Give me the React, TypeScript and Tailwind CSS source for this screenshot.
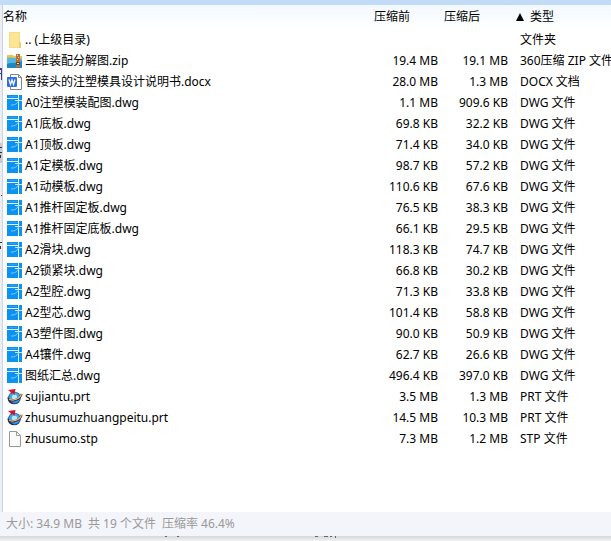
import type { ReactNode } from 'react'

type Kind = 'folder' | 'zip' | 'docx' | 'dwg' | 'prt' | 'stp'

interface Entry {
  name: string
  kind: Kind
  size: string
  packed: string
  type: string
}

const entries: Entry[] = [
  { name: '.. (上级目录)', kind: 'folder', size: '', packed: '', type: '文件夹' },
  { name: '三维装配分解图.zip', kind: 'zip', size: '19.4 MB', packed: '19.1 MB', type: '360压缩 ZIP 文件' },
  { name: '管接头的注塑模具设计说明书.docx', kind: 'docx', size: '28.0 MB', packed: '1.3 MB', type: 'DOCX 文档' },
  { name: 'A0注塑模装配图.dwg', kind: 'dwg', size: '1.1 MB', packed: '909.6 KB', type: 'DWG 文件' },
  { name: 'A1底板.dwg', kind: 'dwg', size: '69.8 KB', packed: '32.2 KB', type: 'DWG 文件' },
  { name: 'A1顶板.dwg', kind: 'dwg', size: '71.4 KB', packed: '34.0 KB', type: 'DWG 文件' },
  { name: 'A1定模板.dwg', kind: 'dwg', size: '98.7 KB', packed: '57.2 KB', type: 'DWG 文件' },
  { name: 'A1动模板.dwg', kind: 'dwg', size: '110.6 KB', packed: '67.6 KB', type: 'DWG 文件' },
  { name: 'A1推杆固定板.dwg', kind: 'dwg', size: '76.5 KB', packed: '38.3 KB', type: 'DWG 文件' },
  { name: 'A1推杆固定底板.dwg', kind: 'dwg', size: '66.1 KB', packed: '29.5 KB', type: 'DWG 文件' },
  { name: 'A2滑块.dwg', kind: 'dwg', size: '118.3 KB', packed: '74.7 KB', type: 'DWG 文件' },
  { name: 'A2锁紧块.dwg', kind: 'dwg', size: '66.8 KB', packed: '30.2 KB', type: 'DWG 文件' },
  { name: 'A2型腔.dwg', kind: 'dwg', size: '71.3 KB', packed: '33.8 KB', type: 'DWG 文件' },
  { name: 'A2型芯.dwg', kind: 'dwg', size: '101.4 KB', packed: '58.8 KB', type: 'DWG 文件' },
  { name: 'A3塑件图.dwg', kind: 'dwg', size: '90.0 KB', packed: '50.9 KB', type: 'DWG 文件' },
  { name: 'A4镶件.dwg', kind: 'dwg', size: '62.7 KB', packed: '26.6 KB', type: 'DWG 文件' },
  { name: '图纸汇总.dwg', kind: 'dwg', size: '496.4 KB', packed: '397.0 KB', type: 'DWG 文件' },
  { name: 'sujiantu.prt', kind: 'prt', size: '3.5 MB', packed: '1.3 MB', type: 'PRT 文件' },
  { name: 'zhusumuzhuangpeitu.prt', kind: 'prt', size: '14.5 MB', packed: '10.3 MB', type: 'PRT 文件' },
  { name: 'zhusumo.stp', kind: 'stp', size: '7.3 MB', packed: '1.2 MB', type: 'STP 文件' },
]

const icons: Record<Kind, ReactNode> = {
  folder: (
    <>
      <path d="M2 0h11v11h1v5H2z" fill="#f9dc83" />
      <path d="M3 1h9v14H3z" fill="#fde596" />
      <path d="M12 10h2v6h-2z" fill="#efcd6c" />
    </>
  ),
  zip: (
    <>
      <path d="M0 2h6l1 1h8v4H0z" fill="#f5c04a" />
      <path d="M0 5c3-1 6 0 9 0s5 0 6 1v9H0z" fill="#54b7e2" />
      <path d="M0 11c4-2 8 0 15-3v7H0z" fill="#2186c4" />
      <path d="M9 1h4v13H9z" fill="#b5703a" />
      <path d="M10 2h1v1h-1zM11 4h1v1h-1zM10 6h1v1h-1z" fill="#f7d27a" />
      <path d="M9 9h4v3H9z" fill="#7a451f" />
      <path d="M10 10h2v1h-2z" fill="#f4d9a4" />
    </>
  ),
  docx: (
    <>
      <path d="M3.500 .5h8l3 3v12h-11z" fill="#fff" stroke="#7c8594" />
      <path d="M11.500 .5v3h3" fill="none" stroke="#7c8594" />
      <rect y="3" width="10" height="10" rx="1" fill="#2f6fdb" />
      <path d="M2 5.500 3.500 10.500 5 6 6.500 10.500 8 5.500" fill="none" stroke="#fff" strokeWidth="1.200" />
    </>
  ),
  dwg: (
    <>
      <path d="M0 0h15v15H0z" fill="#0c93f2" />
      <path d="M0 3h11v1H0z" fill="#e8f6ff" />
      <path d="M2 1h8v1H2z" fill="#2ba1f4" />
      <path d="M11 0h1v15h-1z" fill="#e8f6ff" />
      <path d="M8 5h7v1H8z" fill="#c8e8fd" />
      <path d="M4 10c3 .5 6-1 7.500-4" fill="none" stroke="#7cc6f8" />
    </>
  ),
  prt: (
    <>
      <circle cx="7.500" cy="9" r="6.300" fill="#24539c" />
      <circle cx="7.500" cy="8.500" r="5.300" fill="#3cabe6" />
      <circle cx="7.500" cy="8" r="2.600" fill="#b4ecff" />
      <path d="M.5 8c0 5 3 7.500 7 7-3-1-5-3-5.500-6z" fill="#26244e" />
      <path d="M2 10.500c4 2.500 11 0 12.500-5.500" fill="none" stroke="#35306a" strokeWidth="2.400" />
      <path d="M2 10c4 2.500 11 0 12.500-5.500" fill="none" stroke="#f9bd5e" strokeWidth="1.200" />
      <path d="M1 1 8.500 0 7.500 6 5.500 4 4 5 3.500 3z" fill="#cc1730" />
    </>
  ),
  stp: (
    <>
      <path d="M2.500 .5h7l4 4v11h-11z" fill="#fafafa" stroke="#989898" />
      <path d="M9.500 .5v4h4" fill="none" stroke="#989898" />
    </>
  ),
}

function FileIcon({ kind }: { kind: Kind }) {
  return (
    <svg viewBox="0 0 16 16" className="size-4 shrink-0" aria-hidden="true">
      {icons[kind]}
    </svg>
  )
}

function FileRow({ entry }: { entry: Entry }) {
  return (
    <tr className="h-[21px]">
      <td className="p-0">
        <div className="flex items-center gap-0.5 pl-1">
          <FileIcon kind={entry.kind} />
          <span>{entry.name}</span>
        </div>
      </td>
      <td className="p-0 pr-1.5 text-right">{entry.size}</td>
      <td className="p-0 pr-1.5 text-right">{entry.packed}</td>
      <td className="p-0 pl-1.5">{entry.type}</td>
    </tr>
  )
}

// slivers of the window behind, visible past the left and bottom edges
function BackdropMarks() {
  return (
    <>
      <svg viewBox="0 0 2 250" className="absolute top-0 left-0 h-[250px] w-0.5" aria-hidden="true">
        <path d="M0 68h2v2H0zM0 73h2v1H0zM1 68h1v12H1z" fill="#443a8c" />
        <path d="M0 143h2v20H0z" fill="#c9cbd0" />
        <path d="M0 147h2v1H0zM0 152h2v1H0zM0 155h1v3H0zM1 195h1v1H1zM0 242h2v1H0zM0 246h1v3H0z" fill="#333" />
      </svg>
      <svg viewBox="0 0 180 3" className="absolute bottom-0.5 left-40 h-[3px] w-[180px]" aria-hidden="true">
        <path d="M5 0h2v1H5zM17 0h2v1h-2zM155 0h3v1h-3zM164 0h4v1h-4zM170 0h2v1h-2zM175 0h1v2h-1z" fill="#666" />
      </svg>
    </>
  )
}

export default function App() {
  return (
    <div className="relative flex min-h-screen flex-col overflow-hidden bg-white font-['Noto_Sans','Noto_Sans_CJK_SC',sans-serif] text-[12px] leading-[20px] text-black">
      <div className="h-[5px] bg-[#c2dcf8]" />
      <main className="flex flex-1 overflow-hidden">
        <div className="w-[3px] shrink-0 border-r border-[#c5d6ec] bg-[#eceef3]" />
        <div className="min-w-0 flex-1">
          <table className="w-full table-fixed border-collapse whitespace-nowrap">
            <colgroup>
              <col />
              <col className="w-[70px]" />
              <col className="w-[70px]" />
              <col className="w-[97px]" />
            </colgroup>
            <thead className="bg-linear-to-b from-[#f2f9ff] to-white">
              <tr className="h-6 text-left">
                <th className="p-0 font-normal">名称</th>
                <th className="p-0 font-normal">压缩前</th>
                <th className="p-0 font-normal">压缩后</th>
                <th className="p-0 font-normal" aria-sort="ascending">
                  <div className="flex items-center gap-1.5 pl-0.5">
                    <svg viewBox="0 0 8 8" className="size-2" aria-hidden="true">
                      <path d="M4 0l4 8H0z" />
                    </svg>
                    类型
                  </div>
                </th>
              </tr>
            </thead>
            <tbody>
              {entries.map((entry) => (
                <FileRow key={entry.name} entry={entry} />
              ))}
            </tbody>
          </table>
        </div>
      </main>
      <footer className="flex h-6 items-center gap-1.5 bg-[#f4f5fa] px-1.5 text-[#999]">
        <span>大小: 34.9 MB</span>
        <span>共 19 个文件</span>
        <span>压缩率 46.4%</span>
      </footer>
      <div className="h-[5px] bg-linear-to-b from-[#d6d6d8] to-[#f3f3f3]" />
      <BackdropMarks />
    </div>
  )
}
